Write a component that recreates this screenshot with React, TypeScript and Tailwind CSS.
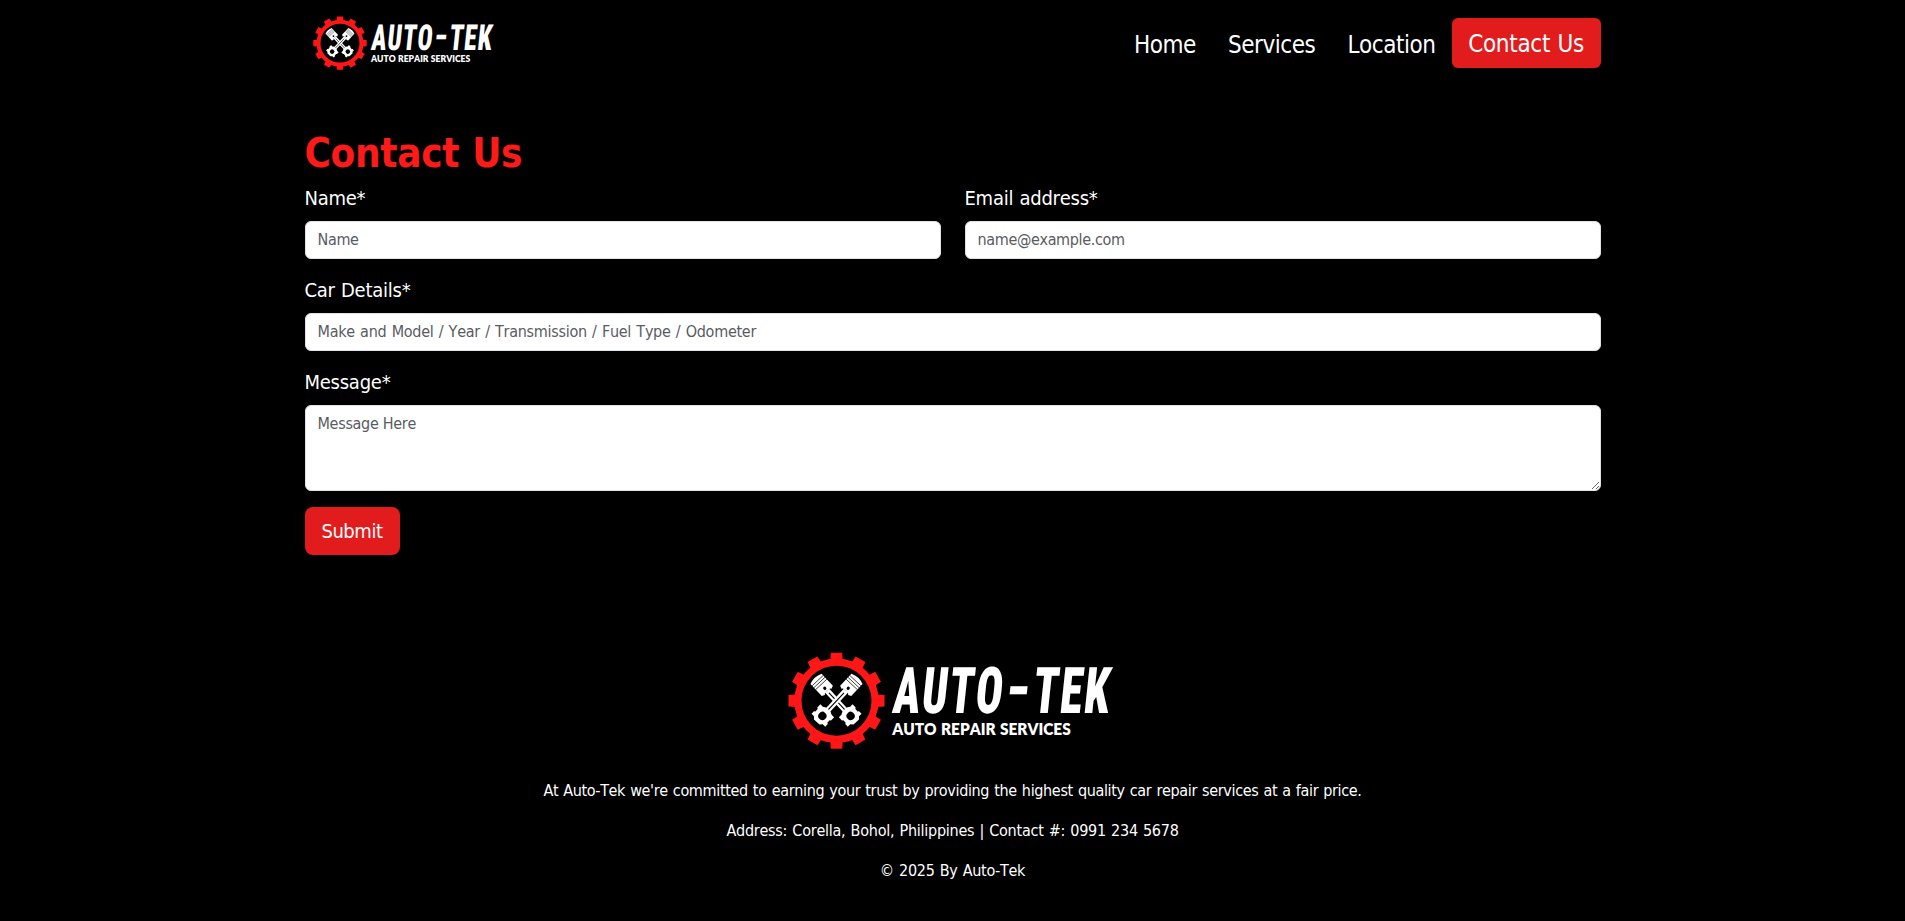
import React from 'react';

const PISTON = (
  <>
    <path d="M-2.9 -14 H2.9 L2.7 14 H-2.7 Z" />
    <path d="M0 -11 V12" stroke="#000" strokeWidth="1.1" />
    <path d="M-7.6 -30 Q0 -33.4 7.6 -30 V-13.5 L4.6 -12.2 Q3.6 -14 0 -14 Q-3.6 -14 -4.6 -12.2 L-7.6 -13.5 Z" />
    <path d="M-7.6 -27.6 H7.6 M-7.6 -25 H7.6 M-7.6 -22.4 H7.6" stroke="#000" strokeWidth="0.7" />
    <circle cy="-17.2" r="1.6" fill="#000" stroke="none" />
    <path
      fillRule="evenodd"
      d="M-3 12 H3 L6 13.6 H9.4 V18 L8.2 18.8 V22.6 H9.4 V26.6 H6 L3.8 29 H-3.8 L-6 26.6 H-9.4 V22.6 H-8.2 V18.8 L-9.4 18 V13.6 H-6 Z M0 16.6 A4.1 4.1 0 1 0 0 24.8 A4.1 4.1 0 1 0 0 16.6 Z"
    />
  </>
);

function Logo({ className }: { className: string }) {
  return (
    <svg viewBox="0 0 330 100" className={className} role="img" aria-label="Auto-Tek">
      <g transform="translate(48.5 48.8)">
        <g fill="#ff1616">
          {[0, 30, 60, 90, 120, 150, 180, 210, 240, 270, 300, 330].map((a) => (
            <path key={a} d="M-6.2 -40 L-5.7 -48 H5.7 L6.2 -40 Z" transform={`rotate(${a})`} />
          ))}
        </g>
        <circle r="38.6" fill="none" stroke="#ff1616" strokeWidth="7.2" />
        <g fill="#fff" transform="rotate(-43)">{PISTON}</g>
        <g fill="#fff" transform="rotate(43)">{PISTON}</g>
      </g>
      <g transform="translate(0 60.8) skewX(-6)" fill="#fff" fontFamily="Roboto, sans-serif" fontWeight="900" fontSize="64.5">
        <text x="103.5" textLength="111" lengthAdjust="spacingAndGlyphs" letterSpacing="2.5">AUTO</text>
        <text x="214.5" y="-2.5" textLength="28" lengthAdjust="spacingAndGlyphs">-</text>
        <text x="243.5" textLength="78" lengthAdjust="spacingAndGlyphs" letterSpacing="2.5">TEK</text>
      </g>
      <text x="104.2" y="82.8" textLength="178.5" lengthAdjust="spacingAndGlyphs" fill="#fff" fontFamily="Lato, sans-serif" fontWeight="800" fontSize="16.5">AUTO REPAIR SERVICES</text>
    </svg>
  );
}

const input = "block w-full rounded-md border border-[#dee2e6] bg-white px-3 py-1.5 text-[16px] leading-6 text-[#212529] placeholder:text-[#595c5f]";
const label = "mb-2 block text-[20px] leading-[30px] tracking-[-0.25px]";

export default function App() {
  return (
    <div className="min-h-[921px] bg-black text-white font-['DejaVu_Sans_Condensed','DejaVu_Sans',sans-serif] [font-kerning:none] [font-stretch:condensed] [word-spacing:0.8px]">
      <div className="mx-auto w-[1296px]">
        <header className="flex h-[86px] items-center justify-between">
          <Logo className="ml-[8.5px] mt-px h-[55.6px] w-[183.5px] overflow-visible" />
          <nav className="flex items-center text-[24px] leading-9 tracking-[-0.45px]">
            <a className="px-4 pt-1">Home</a>
            <a className="px-4 pt-1">Services</a>
            <a className="px-4 pt-1">Location</a>
            <a className="w-[149px] rounded-md bg-[#e21c1c] pb-1.5 pt-2 text-center tracking-[-0.3px]">Contact Us</a>
          </nav>
        </header>
        <main className="pt-[43px]">
          <h1 className="mb-1.5 text-[40px] font-bold leading-[48px] tracking-[-0.3px] text-[#ff1a1a]">Contact Us</h1>
          <form>
            <div className="mb-4 grid grid-cols-2 gap-6">
              <div>
                <label className={label}>Name*</label>
                <input className={`${input} tracking-[-0.35px]`} placeholder="Name" />
              </div>
              <div>
                <label className={label}>Email address*</label>
                <input className={`${input} tracking-[-0.35px]`} placeholder="name@example.com" />
              </div>
            </div>
            <div className="mb-4">
              <label className={label}>Car Details*</label>
              <input className={`${input} tracking-[-0.28px] [word-spacing:1px]`} placeholder="Make and Model / Year / Transmission / Fuel Type / Odometer" />
            </div>
            <div className="mb-4">
              <label className={label}>Message*</label>
              <textarea className={`${input} h-[86px] tracking-[-0.3px]`} placeholder="Message Here" />
            </div>
            <button type="button" className="h-12 w-[95px] rounded-lg bg-[#e21c1c] text-[20px] tracking-[-0.45px]">Submit</button>
          </form>
        </main>
        <footer className="flex flex-col items-center pt-[97px] text-[16px] leading-6">
          <Logo className="mb-[27px] h-[100px] w-[330px] overflow-visible" />
          <p className="mb-4 tracking-[-0.34px]">At Auto-Tek we're committed to earning your trust by providing the highest quality car repair services at a fair price.</p>
          <p className="mb-4 tracking-[-0.24px]">Address: Corella, Bohol, Philippines | Contact #: 0991 234 5678</p>
          <p className="tracking-[-0.27px]">© 2025 By Auto-Tek</p>
        </footer>
      </div>
    </div>
  );
}
